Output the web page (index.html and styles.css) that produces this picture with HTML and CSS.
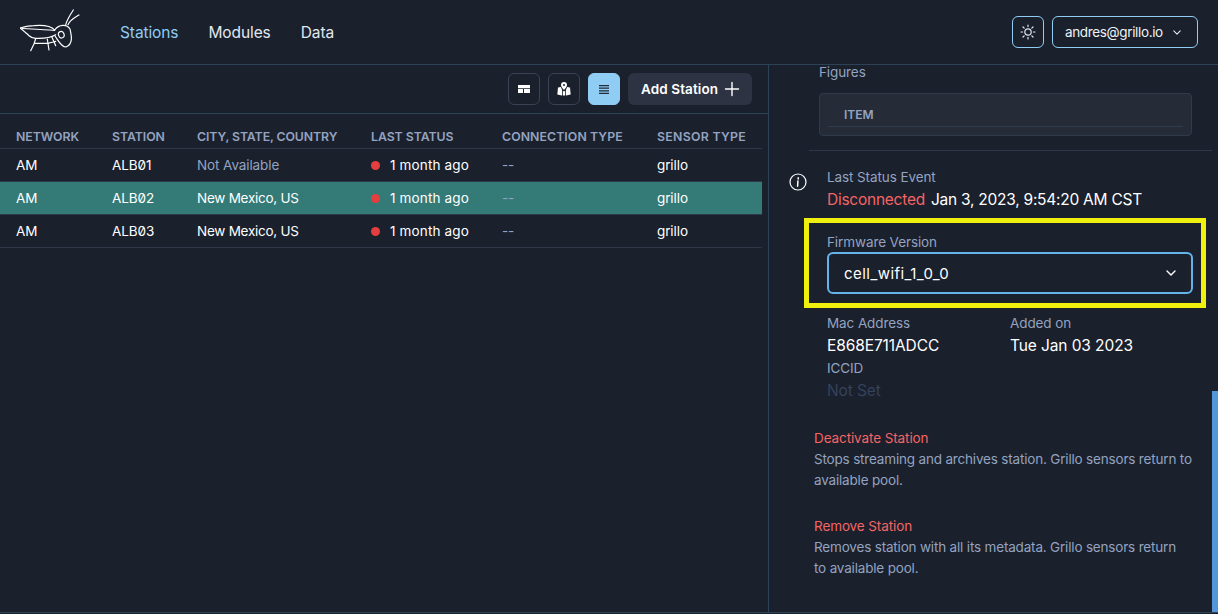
FILE: index.html
```html
<!DOCTYPE html>
<html lang="en">
<head>
<meta charset="utf-8">
<title>Stations</title>
<link rel="stylesheet" href="styles.css">
</head>
<body>
<header class="topbar">
  <svg class="logo" viewBox="20 8 62 44" width="62" height="44" fill="none" stroke="#fff" stroke-width="1.2" stroke-linecap="round" stroke-linejoin="round">
    <path d="M20 28 C26 26.500 30 25.700 34 25.700 C42 25 50 25 54.700 30"/>
    <path d="M20 28 C23 30 26 33 29 35.700 C31 37.500 33 38.300 35.700 38.300 C42 38.600 50 38 55.700 34.700"/>
    <path d="M22 28.500 C32 29 45 29.500 54.500 30.500"/>
    <path d="M54.700 30 C59 24 67 24 70 29 C71 34 74 44 66 47 C61 47 58 40 55 36"/>
    <ellipse cx="61.300" cy="34.700" rx="2.800" ry="3.300" transform="rotate(-20 61.300 34.700)"/>
    <path d="M65.700 24.700 C67 20 70 15 73.300 10 M68 24.700 C70 20 74 18 79 15"/>
    <path d="M35.700 38.500 L34 44 L30.700 50.700 M34 43.300 L49 43.300 M47.300 39 L49 50 M52 37.300 L55.700 45.700 M49 43 L55.700 41.300"/>
  </svg>
  <nav class="nav">
    <a class="nav-link active">Stations</a>
    <a class="nav-link">Modules</a>
    <a class="nav-link">Data</a>
  </nav>
  <div class="top-actions">
    <button class="icon-outline" aria-label="Theme">
      <svg viewBox="0 0 16 16" width="16" height="16" fill="none" stroke="#e2e8f0" stroke-width="1.2" stroke-linecap="round"><circle cx="8" cy="8" r="3.2"/><path d="M8 1v1.6M8 13.4V15M1 8h1.6M13.4 8H15M3 3l1.2 1.2M11.8 11.8 13 13M3 13l1.2-1.2M11.8 4.2 13 3"/></svg>
    </button>
    <button class="user-btn">andres@grillo.io
      <svg viewBox="0 0 10 6" width="8" height="5" fill="none" stroke="#e2e8f0" stroke-width="1.4" stroke-linecap="round" stroke-linejoin="round"><path d="M1 1l4 4 4-4"/></svg>
    </button>
  </div>
</header>
<main class="layout">
  <section class="left">
    <div class="toolbar">
      <button class="tool" aria-label="Table view"><svg viewBox="0 0 12 8" width="12" height="8" fill="#fff"><path d="M0 0h12v3.200H0zM0 4h5v4H0zM6 4h6v4H6z"/></svg></button>
      <button class="tool" aria-label="Map view"><svg viewBox="0 0 14 14" width="14" height="14" fill="#fff"><path d="M7 0a3 3 0 0 1 3 3C10 5 7 8 7 8S4 5 4 3a3 3 0 0 1 3-3zM7 2a1 1 0 1 0 0 2 1 1 0 0 0 0-2z" fill-rule="evenodd"/><path d="M1 5.500 3.800 5 5 7.800V13.500L0.300 12.500zM13 5.500 10.200 5 9 7.800V13.500L13.700 12.500zM5.800 8.500 7 9.600 8.200 8.500V13.500H5.800z"/></svg></button>
      <button class="tool selected" aria-label="List view"><svg viewBox="0 0 10 9" width="10" height="9" fill="none" stroke="#1f2937" stroke-width="1.300"><path d="M0 .7h10M0 3.200h10M0 5.800h10M0 8.300h10"/></svg></button>
      <button class="add">Add Station
        <svg viewBox="0 0 16 16" width="16" height="16" fill="none" stroke="#fff" stroke-width="1.4" stroke-linecap="round"><path d="M8 1.500v13M1.500 8h13"/></svg>
      </button>
    </div>
    <table class="stations">
      <thead>
        <tr><th class="c1">Network</th><th class="c2">Station</th><th class="c3">City, State, Country</th><th class="c4">Last Status</th><th class="c5">Connection Type</th><th class="c6">Sensor Type</th></tr>
      </thead>
      <tbody>
        <tr><td>AM</td><td class="code">ALB01</td><td class="muted">Not Available</td><td class="ago"><span class="dot"></span>1 month ago</td><td class="muted">--</td><td>grillo</td></tr>
        <tr class="hl"><td>AM</td><td class="code">ALB02</td><td class="place">New Mexico, US</td><td class="ago"><span class="dot"></span>1 month ago</td><td class="muted">--</td><td>grillo</td></tr>
        <tr><td>AM</td><td class="code">ALB03</td><td class="place">New Mexico, US</td><td class="ago"><span class="dot"></span>1 month ago</td><td class="muted">--</td><td>grillo</td></tr>
      </tbody>
    </table>
  </section>
  <aside class="right">
    <div class="figures">
      <div class="label">Figures</div>
      <div class="fig-box"><div class="fig-head">Item</div></div>
    </div>
    <div class="status">
      <svg class="info" viewBox="0 0 18 18" width="18" height="18" fill="none" stroke="#fff" stroke-width="1.2"><circle cx="9" cy="9" r="8"/><path d="M9.200 4.700v1.300M8.900 8l-.3 5.300" stroke-width="1.500" stroke-linecap="round"/></svg>
      <div class="status-text">
        <div class="label">Last Status Event</div>
        <div class="status-line"><span class="red">Disconnected</span><span>Jan 3, 2023, 9:54:20 AM CST</span></div>
      </div>
    </div>
    <div class="highlight">
      <div class="label">Firmware Version</div>
      <div class="select">cell_wifi_1_0_0
        <svg viewBox="0 0 10 6" width="10" height="6" fill="none" stroke="#fff" stroke-width="1.4" stroke-linecap="round" stroke-linejoin="round"><path d="M1 1l4 4 4-4"/></svg>
      </div>
    </div>
    <div class="meta">
      <div><div class="label">Mac Address</div><div class="value">E868E711ADCC</div></div>
      <div><div class="label">Added on</div><div class="value">Tue Jan 03 2023</div></div>
      <div><div class="label">ICCID</div><div class="value unset">Not Set</div></div>
    </div>
    <div class="danger">
      <div class="danger-title">Deactivate Station</div>
      <p>Stops streaming and archives station. Grillo sensors return to<br>available pool.</p>
    </div>
    <div class="danger">
      <div class="danger-title">Remove Station</div>
      <p>Removes station with all its metadata. Grillo sensors return<br>to available pool.</p>
    </div>
    <div class="scroll-thumb"></div>
  </aside>
</main>
</body>
</html>
```
FILE: styles.css
```css
* { box-sizing: border-box; }
html, body { margin: 0; height: 614px; overflow: hidden; }
body {
  background: #1a202c;
  color: #fff;
  font-family: Inter, "Noto Sans", sans-serif;
  font-size: 14px;
}
button { font: inherit; color: inherit; background: none; cursor: pointer; }

.topbar {
  height: 65px;
  display: flex;
  align-items: center;
  padding: 0 20px;
  border-bottom: 1px solid #2c4257;
}
.logo { flex: none; margin-top: -4px; margin-right: 38px; }
.nav { display: flex; gap: 30px; font-size: 15.500px; letter-spacing: -0.100px; }
.nav-link { color: #e2e8f0; }
.nav-link.active { color: #90cdf4; }
.top-actions { margin-left: auto; display: flex; gap: 8px; }
.icon-outline {
  width: 32px; height: 32px; padding: 0;
  border: 1px solid #90cdf4; border-radius: 6px;
  display: flex; align-items: center; justify-content: center;
}
.user-btn {
  width: 146px; height: 32px; padding: 0 0 0 12px;
  border: 1px solid #90cdf4; border-radius: 6px;
  display: flex; align-items: center; gap: 10px;
  font-size: 13.500px; letter-spacing: -0.350px; color: #edf2f7;
}

.layout { display: flex; height: 548px; border-bottom: 1px solid #2c4257; }
.left { width: 769px; flex: none; border-right: 1px solid #2c4257; }
.toolbar {
  height: 49px;
  display: flex; justify-content: flex-end; align-items: center; gap: 8px;
  padding: 0 16px 0 0;
  border-bottom: 1px solid #2c4257;
}
.tool {
  width: 32px; height: 32px; padding: 0;
  border: 1px solid #3a4354; border-radius: 6px;
  display: flex; align-items: center; justify-content: center;
}
.tool.selected { background: #90cdf4; border-color: #90cdf4; }
.add {
  width: 124px; height: 32px; padding: 0 0 0 13px;
  border: 0; border-radius: 6px; background: #2d3342;
  display: flex; align-items: center; gap: 6px;
  font-size: 13.500px; font-weight: 600; letter-spacing: 0.100px;
}

.stations { width: 762px; border-collapse: collapse; table-layout: fixed; }
.stations th {
  height: 34px; padding: 12px 0 0 16px;
  text-align: left; font-size: 12.300px; font-weight: 600;
  letter-spacing: -0.050px; text-transform: uppercase; color: #94a3c0;
  border-bottom: 1px solid #2d3748;
}
.stations td {
  height: 33px; padding: 0 0 0 16px;
  font-size: 13.500px; letter-spacing: -0.100px; color: #fff;
  border-bottom: 1px solid #2d3748;
}
.c1 { width: 96px; }
.c2 { width: 85px; }
.c3 { width: 174px; }
.c4 { width: 131px; }
.c5 { width: 155px; }
.stations th.c3 { letter-spacing: -0.100px; }
.stations th.c5 { letter-spacing: 0.080px; }
.stations th.c6 { letter-spacing: 0.300px; }
.stations td.muted { color: #94a3c0; }
.stations td.code { font-feature-settings: "zero" 1; }
.stations td.place { letter-spacing: -0.250px; }
.stations td.ago { letter-spacing: 0.150px; }
.stations td .dot { margin-right: 10px; }
.stations tr.hl td { background: #347a77; }
.dot {
  display: inline-block; width: 9px; height: 9px; border-radius: 50%;
  background: #e53e3e;
}

.right { position: relative; flex: 1; min-width: 0; }
.label { font-size: 13.500px; line-height: 18px; color: #94a3c0; letter-spacing: -0.100px; }

.figures { margin-left: 50px; height: 87px; }
.figures .label { margin-top: -2px; }
.fig-box {
  margin-top: 12px; height: 43px; width: 373px;
  background: #252c38; border: 1px solid #2f3a4a; border-radius: 4px; padding: 10px 8px 0;
}
.fig-head {
  height: 23px; padding: 3px 16px 0;
  font-size: 12px; font-weight: 600; text-transform: uppercase; color: #94a3c0;
  border-bottom: 1px solid #303a4e;
}
.status {
  width: 403px; margin-left: 40px;
  border-top: 1px solid #2d3748;
  padding: 17px 0 0 18px;
}
.info { position: absolute; left: 20px; top: 108px; }
.status-line { display: flex; gap: 6px; font-size: 15.500px; line-height: 24px; letter-spacing: -0.250px; margin-top: 2px; }
.red { color: #f56565; }

.highlight {
  width: 402px; height: 90px; margin: 6px 0 0 35px;
  border: 5px solid #f0f00f;
  padding: 10px 8px 0 18px;
}
.select {
  height: 42px; margin-top: 1px; width: 366px;
  border: 2px solid #63b3ed; border-radius: 6px;
  display: flex; align-items: center; justify-content: space-between;
  padding: 0 15px 0 15px; font-size: 15px; letter-spacing: 0.450px;
}
.meta {
  display: grid; grid-template-columns: 183px 1fr;
  margin: 6px 0 0 58px;
}
.value { font-size: 15.500px; line-height: 27px; letter-spacing: -0.100px; }
.value.unset { color: #34425c; }

.danger { margin: 25px 0 0 45px; width: 384px; }
.meta + .danger { margin-top: 24px; }
.danger-title { font-size: 13.500px; line-height: 21px; color: #f56565; letter-spacing: -0.100px; }
.danger p { margin: 0; font-size: 13.500px; line-height: 21px; color: #94a3c0; letter-spacing: -0.180px; }

.scroll-thumb {
  position: absolute; right: 0; top: 326px; bottom: 0; width: 6px;
  background: #5596d8;
}
```
